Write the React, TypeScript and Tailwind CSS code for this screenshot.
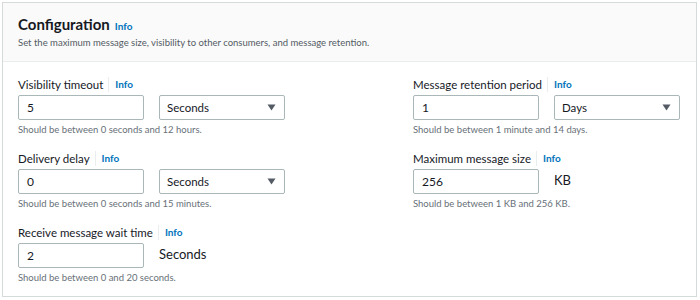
import React from "react";

type Field = {
  label: string;
  value: string;
  unit: string;
  select: boolean;
  hint: string;
};

const left: Field[] = [
  { label: "Visibility timeout", value: "5", unit: "Seconds", select: true, hint: "Should be between 0 seconds and 12 hours." },
  { label: "Delivery delay", value: "0", unit: "Seconds", select: true, hint: "Should be between 0 seconds and 15 minutes." },
  { label: "Receive message wait time", value: "2", unit: "Seconds", select: false, hint: "Should be between 0 and 20 seconds." },
];

const right: Field[] = [
  { label: "Message retention period", value: "1", unit: "Days", select: true, hint: "Should be between 1 minute and 14 days." },
  { label: "Maximum message size", value: "256", unit: "KB", select: false, hint: "Should be between 1 KB and 256 KB." },
];

function FormField({ field }: { field: Field }) {
  return (
    <div className="flex flex-col h-[74px]">
      <div className="flex items-center h-[19px] text-[11.5px] text-[#16191f]">
        <span>{field.label}</span>
        <span className="ml-[5px] mr-[6px] w-px h-[15px] bg-[#eaeded]" />
        <span className="text-[10px] font-bold text-[#0073bb]">Info</span>
      </div>
      <div className="flex items-center mt-[1px] gap-[15px]">
        <div className="w-[126px] h-[25px] border border-[#aab7b8] rounded-[2px] flex items-center pl-[8px] text-[12px] text-[#16191f] bg-white">
          {field.value}
        </div>
        {field.select ? (
          <div className="w-[126px] h-[25px] border border-[#aab7b8] rounded-[2px] flex items-center justify-between pl-[7px] pr-[8px] text-[11.5px] text-[#16191f] bg-white">
            <span>{field.unit}</span>
            <svg width="9" height="7" viewBox="0 0 9 7">
              <path d="M0.5 0.5 L8.5 0.5 L4.5 6.5 Z" fill="#545b64" />
            </svg>
          </div>
        ) : (
          <div className="text-[13px] text-[#16191f] -mt-[2px]">{field.unit}</div>
        )}
      </div>
      <div className="mt-[3px] text-[9.5px] leading-[14px] text-[#687078]">{field.hint}</div>
    </div>
  );
}

export default function App() {
  return (
    <div
      className="w-[700px] h-[300px] bg-white pt-[2px] pl-[2px] pr-[3px]"
      style={{ fontFamily: 'Lato, "Liberation Sans", Arial, sans-serif' }}
    >
      <div className="h-[295px] border border-[#d5dbdb] bg-white">
        <div className="h-[59px] bg-[#fafafa] border-b border-[#eaeded] pl-[15px] pt-[11px]">
          <div className="flex items-baseline gap-[5px]">
            <h2 className="text-[15px] font-bold text-[#16191f] leading-[20px]">Configuration</h2>
            <span className="text-[10px] font-bold text-[#0073bb]">Info</span>
          </div>
          <p className="text-[9.5px] leading-[14px] text-[#545b64] mt-[2px]">
            Set the maximum message size, visibility to other consumers, and message retention.
          </p>
        </div>
        <div className="flex pl-[15px] pt-[13px]">
          <div className="w-[395px] flex flex-col">
            {left.map((f) => (
              <FormField key={f.label} field={f} />
            ))}
          </div>
          <div className="flex flex-col">
            {right.map((f) => (
              <FormField key={f.label} field={f} />
            ))}
          </div>
        </div>
      </div>
    </div>
  );
}
